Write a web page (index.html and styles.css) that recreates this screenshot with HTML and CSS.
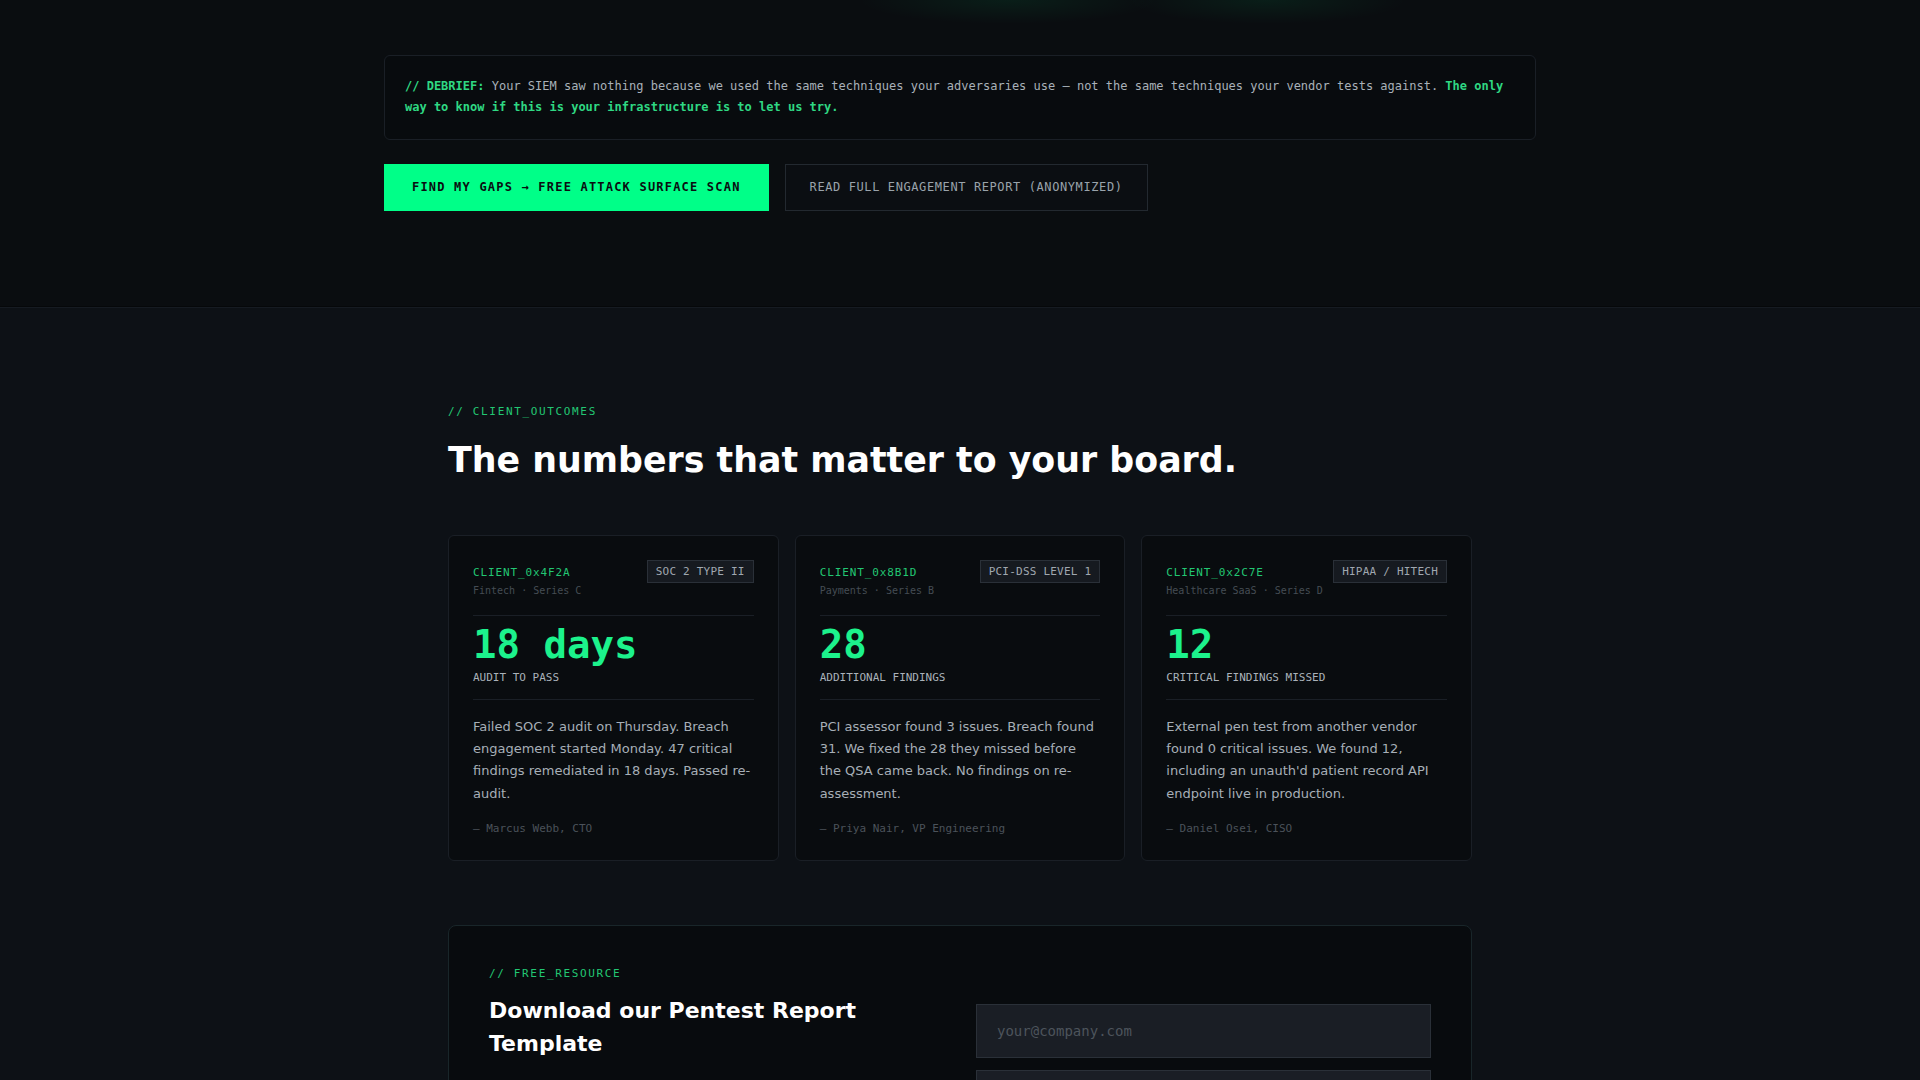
FILE: index.html
```html
<!DOCTYPE html>
<html lang="en">
<head>
  <meta charset="UTF-8">
  <meta name="viewport" content="width=device-width, initial-scale=1.0">
  <title>Breach Engagement — Client Outcomes</title>
  <link rel="stylesheet" href="styles.css">
</head>
<body>
  <section class="debrief-section">
    <div class="wrap">
      <div class="debrief">
        <span class="accent">// DEBRIEF:</span> Your SIEM saw nothing because we used the same techniques your adversaries use — not the same techniques your vendor tests against. <span class="accent">The only way to know if this is your infrastructure is to let us try.</span>
      </div>
      <div class="actions">
        <a class="btn btn-primary" href="#">FIND MY GAPS → FREE ATTACK SURFACE SCAN</a>
        <a class="btn btn-ghost" href="#">READ FULL ENGAGEMENT REPORT (ANONYMIZED)</a>
      </div>
    </div>
  </section>

  <section class="outcomes">
    <div class="inner">
      <div class="eyebrow">// CLIENT_OUTCOMES</div>
      <h2>The numbers that matter to your board.</h2>

      <div class="cards">
        <div class="card">
          <div class="card-head">
            <div class="client">
              <div class="client-id">CLIENT_0x4F2A</div>
              <div class="client-meta">Fintech · Series C</div>
            </div>
            <span class="badge">SOC 2 TYPE II</span>
          </div>
          <div class="metric">
            <div class="metric-value">18 days</div>
            <div class="metric-label">AUDIT TO PASS</div>
          </div>
          <p class="quote">Failed SOC 2 audit on Thursday. Breach engagement started Monday. 47 critical findings remediated in 18 days. Passed re-audit.</p>
          <div class="author">— Marcus Webb, CTO</div>
        </div>

        <div class="card">
          <div class="card-head">
            <div class="client">
              <div class="client-id">CLIENT_0x8B1D</div>
              <div class="client-meta">Payments · Series B</div>
            </div>
            <span class="badge">PCI-DSS LEVEL 1</span>
          </div>
          <div class="metric">
            <div class="metric-value">28</div>
            <div class="metric-label">ADDITIONAL FINDINGS</div>
          </div>
          <p class="quote">PCI assessor found 3 issues. Breach found 31. We fixed the 28 they missed before the QSA came back. No findings on re-assessment.</p>
          <div class="author">— Priya Nair, VP Engineering</div>
        </div>

        <div class="card">
          <div class="card-head">
            <div class="client">
              <div class="client-id">CLIENT_0x2C7E</div>
              <div class="client-meta">Healthcare SaaS · Series D</div>
            </div>
            <span class="badge">HIPAA / HITECH</span>
          </div>
          <div class="metric">
            <div class="metric-value">12</div>
            <div class="metric-label">CRITICAL FINDINGS MISSED</div>
          </div>
          <p class="quote">External pen test from another vendor found 0 critical issues. We found 12, including an unauth'd patient record API endpoint live in production.</p>
          <div class="author">— Daniel Osei, CISO</div>
        </div>
      </div>

      <div class="resource">
        <div class="resource-text">
          <div class="eyebrow">// FREE_RESOURCE</div>
          <h3>Download our Pentest Report Template</h3>
          <p>The exact report format we deliver to clients — CVSS scoring, attack narratives, and remediation steps your engineers can act on.</p>
        </div>
        <form class="resource-form" onsubmit="event.preventDefault()">
          <input type="email" placeholder="your@company.com">
          <input type="text" placeholder="Company name">
          <button type="submit">SEND ME THE TEMPLATE →</button>
        </form>
      </div>
    </div>
  </section>
</body>
</html>
```

FILE: styles.css
```css
body { margin: 0; background: #0d1116; color: #c9d1d9; font-family: "DejaVu Sans", sans-serif; }
a { text-decoration: none; }

.debrief-section {
  background:
    radial-gradient(ellipse 150px 24px at 52.5% 0, rgba(0, 255, 136, 0.07), transparent),
    radial-gradient(ellipse 140px 24px at 66% 0, rgba(0, 255, 136, 0.07), transparent),
    #0a0d10;
  padding: 55px 0 95px;
  border-bottom: 1px solid #06080a;
}
.wrap { max-width: 1152px; margin: 0 auto; }

.debrief {
  font-family: "DejaVu Sans Mono", monospace;
  font-size: 12px;
  line-height: 21px;
  color: #a9b1b9;
  padding: 20px 20px 21px;
  background: #080b0e;
  border: 1px solid #1a1f26;
  border-radius: 6px;
}
.accent { color: #2fd883; font-weight: bold; }

.actions { display: flex; gap: 16px; margin-top: 24px; }
.btn {
  font-family: "DejaVu Sans Mono", monospace;
  font-size: 12px;
  line-height: 15px;
  padding: 16px 28px;
}
.btn-primary { background: #00ff88; color: #0a0d10; font-weight: bold; letter-spacing: 0.1em; }
.btn-ghost { color: #9aa3ab; letter-spacing: 0.05em; padding: 15px 24px; border: 1px solid #232930; background: #0b0e12; }

.outcomes { border-top: 1px solid #161b22; padding: 96px 0 80px; }
.inner { max-width: 1024px; margin: 0 auto; }

.eyebrow {
  font-family: "DejaVu Sans Mono", monospace;
  font-size: 11px;
  line-height: 16px;
  letter-spacing: 0.15em;
  color: #22c773;
}
h2 { margin: 18px 0 0; font-size: 34.8px; line-height: 44px; color: #ffffff; font-weight: bold; }

.cards { display: grid; grid-template-columns: repeat(3, 1fr); gap: 16px; margin-top: 53px; }
.card {
  background: #090c0f;
  border: 1px solid #1a1f26;
  border-radius: 6px;
  padding: 24px 24px 23px;
}
.card-head {
  display: flex;
  justify-content: space-between;
  align-items: flex-start;
  padding-bottom: 16px;
  border-bottom: 1px solid #1a1f26;
}
.client { padding-top: 5px; font-family: "DejaVu Sans Mono", monospace; }
.client-id { font-size: 11px; line-height: 16px; letter-spacing: 0.08em; color: #22c773; }
.client-meta { font-size: 10px; line-height: 16px; margin-top: 2px; color: #454c54; }
.badge {
  font-family: "DejaVu Sans Mono", monospace;
  font-size: 11px;
  line-height: 13px;
  letter-spacing: 0.02em;
  padding: 4px 8px;
  color: #a0a8b0;
  background: #161a20;
  border: 1px solid #2a3038;
}

.metric { padding: 9px 0 13px; border-bottom: 1px solid #1a1f26; font-family: "DejaVu Sans Mono", monospace; }
.metric-value { font-size: 39px; line-height: 40px; font-weight: bold; color: #1cf28c; }
.metric-label { font-size: 11px; line-height: 16px; margin-top: 5px; color: #aab2ba; }

.quote { margin: 16px 0 0; font-size: 13px; line-height: 22.2px; color: #a7afb7; }
.author { margin-top: 16px; font-family: "DejaVu Sans Mono", monospace; font-size: 11px; line-height: 16px; color: #4b525a; }

.resource {
  margin-top: 64px;
  display: grid;
  grid-template-columns: 1fr 1fr;
  gap: 32px;
  padding: 40px;
  background: #080b0e;
  border: 1px solid #19262a;
  border-radius: 8px;
}
.resource h3 { margin: 12px 0 0; font-size: 22px; line-height: 33px; color: #ffffff; }
.resource p { margin: 16px 0 0; font-size: 13px; line-height: 22px; color: #a7afb7; }
.resource-form { display: flex; flex-direction: column; gap: 12px; padding-top: 38px; }
.resource-form input {
  font-family: "DejaVu Sans Mono", monospace;
  font-size: 14px;
  height: 54px;
  box-sizing: border-box;
  padding: 0 20px;
  color: #c9d1d9;
  background: #1a1e25;
  border: 1px solid #2a3038;
  outline: none;
}
.resource-form input::placeholder { color: #4d545c; }
.resource-form button {
  font-family: "DejaVu Sans Mono", monospace;
  font-size: 12px;
  font-weight: bold;
  letter-spacing: 0.1em;
  height: 48px;
  border: none;
  background: #00ff88;
  color: #0a0d10;
}
```
